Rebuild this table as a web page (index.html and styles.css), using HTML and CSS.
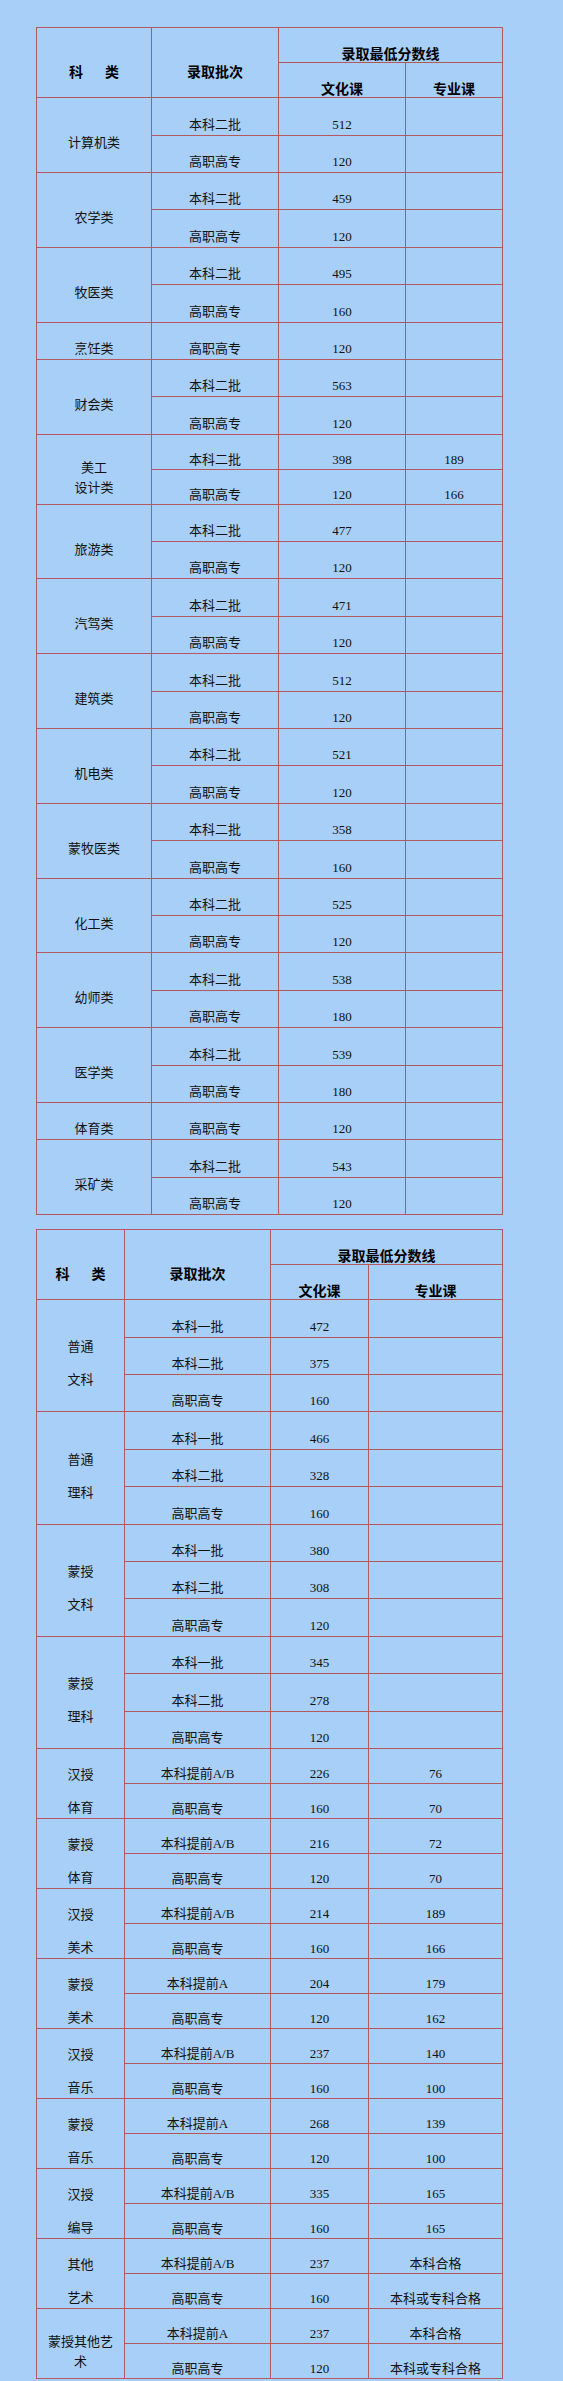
FILE: index.html
```html
<!DOCTYPE html>
<html lang="zh-CN">
<head>
<meta charset="utf-8">
<title>录取最低分数线</title>
<link rel="stylesheet" href="styles.css">
</head>
<body>
<div class="page">
  <table class="score t1">
    <colgroup><col class="c1"><col class="c2"><col class="c3"><col class="c4"></colgroup>
    <tr class="hd1"><th rowspan="2">科<span class="gap"></span>类</th><th rowspan="2">录取批次</th><th colspan="2">录取最低分数线</th></tr>
    <tr class="hd2"><th>文化课</th><th>专业课</th></tr>
    <tr><td rowspan="2">计算机类</td><td>本科二批</td><td>512</td><td></td></tr>
    <tr><td>高职高专</td><td>120</td><td></td></tr>
    <tr><td rowspan="2">农学类</td><td>本科二批</td><td>459</td><td></td></tr>
    <tr><td>高职高专</td><td>120</td><td></td></tr>
    <tr><td rowspan="2">牧医类</td><td>本科二批</td><td>495</td><td></td></tr>
    <tr><td>高职高专</td><td>160</td><td></td></tr>
    <tr><td>烹饪类</td><td>高职高专</td><td>120</td><td></td></tr>
    <tr><td rowspan="2">财会类</td><td>本科二批</td><td>563</td><td></td></tr>
    <tr><td>高职高专</td><td>120</td><td></td></tr>
    <tr class="short a"><td rowspan="2" class="two">美工<br>设计类</td><td>本科二批</td><td>398</td><td>189</td></tr>
    <tr class="short"><td>高职高专</td><td>120</td><td>166</td></tr>
    <tr><td rowspan="2">旅游类</td><td>本科二批</td><td>477</td><td></td></tr>
    <tr><td>高职高专</td><td>120</td><td></td></tr>
    <tr><td rowspan="2">汽驾类</td><td>本科二批</td><td>471</td><td></td></tr>
    <tr><td>高职高专</td><td>120</td><td></td></tr>
    <tr><td rowspan="2">建筑类</td><td>本科二批</td><td>512</td><td></td></tr>
    <tr><td>高职高专</td><td>120</td><td></td></tr>
    <tr><td rowspan="2">机电类</td><td>本科二批</td><td>521</td><td></td></tr>
    <tr><td>高职高专</td><td>120</td><td></td></tr>
    <tr><td rowspan="2">蒙牧医类</td><td>本科二批</td><td>358</td><td></td></tr>
    <tr><td>高职高专</td><td>160</td><td></td></tr>
    <tr><td rowspan="2">化工类</td><td>本科二批</td><td>525</td><td></td></tr>
    <tr><td>高职高专</td><td>120</td><td></td></tr>
    <tr><td rowspan="2">幼师类</td><td>本科二批</td><td>538</td><td></td></tr>
    <tr><td>高职高专</td><td>180</td><td></td></tr>
    <tr><td rowspan="2">医学类</td><td>本科二批</td><td>539</td><td></td></tr>
    <tr><td>高职高专</td><td>180</td><td></td></tr>
    <tr><td>体育类</td><td>高职高专</td><td>120</td><td></td></tr>
    <tr><td rowspan="2">采矿类</td><td>本科二批</td><td>543</td><td></td></tr>
    <tr><td>高职高专</td><td>120</td><td></td></tr>
  </table>

  <table class="score t2">
    <colgroup><col class="c1"><col class="c2"><col class="c3"><col class="c4"></colgroup>
    <tr class="hd1"><th rowspan="2">科<span class="gap"></span>类</th><th rowspan="2">录取批次</th><th colspan="2">录取最低分数线</th></tr>
    <tr class="hd2b"><th>文化课</th><th>专业课</th></tr>
    <tr><td rowspan="3" class="pair"><span>普通</span><span>文科</span></td><td>本科一批</td><td>472</td><td></td></tr>
    <tr><td>本科二批</td><td>375</td><td></td></tr>
    <tr><td>高职高专</td><td>160</td><td></td></tr>
    <tr><td rowspan="3" class="pair"><span>普通</span><span>理科</span></td><td>本科一批</td><td>466</td><td></td></tr>
    <tr><td>本科二批</td><td>328</td><td></td></tr>
    <tr><td>高职高专</td><td>160</td><td></td></tr>
    <tr><td rowspan="3" class="pair"><span>蒙授</span><span>文科</span></td><td>本科一批</td><td>380</td><td></td></tr>
    <tr><td>本科二批</td><td>308</td><td></td></tr>
    <tr><td>高职高专</td><td>120</td><td></td></tr>
    <tr><td rowspan="3" class="pair"><span>蒙授</span><span>理科</span></td><td>本科一批</td><td>345</td><td></td></tr>
    <tr><td>本科二批</td><td>278</td><td></td></tr>
    <tr><td>高职高专</td><td>120</td><td></td></tr>
    <tr class="short"><td rowspan="2" class="pair"><span>汉授</span><span>体育</span></td><td>本科提前A/B</td><td>226</td><td>76</td></tr>
    <tr class="short"><td>高职高专</td><td>160</td><td>70</td></tr>
    <tr class="short"><td rowspan="2" class="pair"><span>蒙授</span><span>体育</span></td><td>本科提前A/B</td><td>216</td><td>72</td></tr>
    <tr class="short"><td>高职高专</td><td>120</td><td>70</td></tr>
    <tr class="short"><td rowspan="2" class="pair"><span>汉授</span><span>美术</span></td><td>本科提前A/B</td><td>214</td><td>189</td></tr>
    <tr class="short"><td>高职高专</td><td>160</td><td>166</td></tr>
    <tr class="short"><td rowspan="2" class="pair"><span>蒙授</span><span>美术</span></td><td>本科提前A</td><td>204</td><td>179</td></tr>
    <tr class="short"><td>高职高专</td><td>120</td><td>162</td></tr>
    <tr class="short"><td rowspan="2" class="pair"><span>汉授</span><span>音乐</span></td><td>本科提前A/B</td><td>237</td><td>140</td></tr>
    <tr class="short"><td>高职高专</td><td>160</td><td>100</td></tr>
    <tr class="short"><td rowspan="2" class="pair"><span>蒙授</span><span>音乐</span></td><td>本科提前A</td><td>268</td><td>139</td></tr>
    <tr class="short"><td>高职高专</td><td>120</td><td>100</td></tr>
    <tr class="short"><td rowspan="2" class="pair"><span>汉授</span><span>编导</span></td><td>本科提前A/B</td><td>335</td><td>165</td></tr>
    <tr class="short"><td>高职高专</td><td>160</td><td>165</td></tr>
    <tr class="short"><td rowspan="2" class="pair"><span>其他</span><span>艺术</span></td><td>本科提前A/B</td><td>237</td><td>本科合格</td></tr>
    <tr class="short"><td>高职高专</td><td>160</td><td>本科或专科合格</td></tr>
    <tr class="short"><td rowspan="2" class="wrap">蒙授其他艺术</td><td>本科提前A</td><td>237</td><td>本科合格</td></tr>
    <tr class="short"><td>高职高专</td><td>120</td><td>本科或专科合格</td></tr>
  </table>
</div>
</body>
</html>
```

FILE: styles.css
```css
html, body {
  margin: 0;
  padding: 0;
  background: #a8cff7;
}

.page {
  display: flex;
  flex-direction: column;
  align-items: flex-start;
  gap: 14px;
  padding: 27px 0 12px 36px;
}

.score {
  border-collapse: collapse;
  table-layout: fixed;
  width: 466px;
  font-family: "Liberation Serif", "Noto Sans CJK SC", serif;
  font-size: 13px;
  color: #111;
}

.score th,
.score td {
  border: 1px solid #b4585f;
  padding: 16px 2px 0;
  text-align: center;
  vertical-align: middle;
  line-height: 18px;
}

.score th {
  font-family: "Noto Sans CJK SC", sans-serif;
  font-weight: bold;
  font-size: 14px;
  color: #000;
}

/* row heights (integer, to keep lines crisp) */
.score tr { height: 37px; }
.score tr:nth-child(5n+1),
.score tr:nth-child(5n+3) { height: 38px; }
.score tr.short { height: 34px; }
.score tr.short:nth-child(odd) { height: 35px; }
.score tr.short.a { height: 35px; }
.score tr.hd1 { height: 35px; }
.score tr.hd2 { height: 35px; }
.score tr.hd2b { height: 34px; }

.gap {
  display: inline-block;
  width: 22px;
}

.t1 .c1 { width: 115px; }
.t1 .c2 { width: 127px; }
.t1 .c3 { width: 127px; }
.t1 .c4 { width: 97px; }

.t2 .c1 { width: 88px; }
.t2 .c2 { width: 146px; }
.t2 .c3 { width: 98px; }
.t2 .c4 { width: 134px; }

.score td.two { line-height: 20px; }

.score td.pair span {
  display: block;
  line-height: 16px;
}
.score td.pair span + span { margin-top: 17px; }

.score td.wrap {
  line-height: 20px;
  padding-left: 6px;
  padding-right: 6px;
}
```
